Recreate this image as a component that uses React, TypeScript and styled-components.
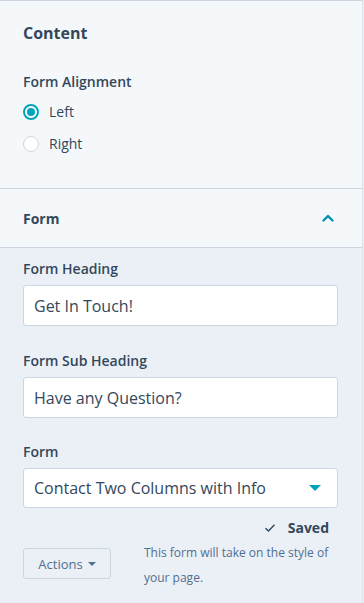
import React from "react";
import styled, { createGlobalStyle } from "styled-components";

const Global = createGlobalStyle`
  html, body { margin: 0; padding: 0; background: #eaf0f6; }
  body { font-family: "Open Sans", "Liberation Sans", sans-serif; color: #33475b; }
  * { box-sizing: border-box; }
`;

const Panel = styled.div`
  width: 363px;
  min-height: 603px;
  border-top: 1px solid #cbd6e2;
  border-right: 1px solid #dfe3eb;
  background: #eaf0f6;
  display: flex;
  flex-direction: column;
`;

const ContentSection = styled.section`
  background: #f5f8fa;
  padding: 21px 23px 34px;
  border-bottom: 1px solid #cbd6e2;
  display: flex;
  flex-direction: column;
`;

const SectionTitle = styled.h2`
  margin: 0;
  font-size: 16px;
  line-height: 22px;
  font-weight: 700;
  color: #33475b;
`;

const Label = styled.div`
  font-size: 14px;
  line-height: 20px;
  font-weight: 600;
  color: #33475b;
`;

const AlignLabel = styled(Label)`
  margin-top: 28px;
`;

const RadioList = styled.div`
  display: flex;
  flex-direction: column;
  gap: 12px;
  margin-top: 10px;
`;

const RadioRow = styled.label`
  display: flex;
  align-items: center;
  gap: 10px;
  font-size: 14px;
  line-height: 20px;
  color: #33475b;
`;

const RadioCircle = styled.span<{ $checked?: boolean }>`
  width: 16px;
  height: 16px;
  border-radius: 50%;
  background: #fff;
  border: ${(p) => (p.$checked ? "2px solid #00a4bd" : "1px solid #cbd6e2")};
  display: flex;
  align-items: center;
  justify-content: center;
  &::after {
    content: "";
    display: ${(p) => (p.$checked ? "block" : "none")};
    width: 8px;
    height: 8px;
    border-radius: 50%;
    background: #00a4bd;
  }
`;

const AccordionHeader = styled.div`
  background: #f5f8fa;
  height: 59px;
  padding: 0 23px;
  display: flex;
  align-items: center;
  justify-content: space-between;
  border-bottom: 1px solid #cbd6e2;
`;

const HeaderTitle = styled.div`
  font-size: 14px;
  font-weight: 700;
  color: #33475b;
`;

const Body = styled.div`
  padding: 11px 24px 0 23px;
  display: flex;
  flex-direction: column;
`;

const Field = styled.div<{ $gap?: number }>`
  display: flex;
  flex-direction: column;
  gap: 6px;
  margin-top: ${(p) => p.$gap ?? 0}px;
`;

const Input = styled.div<{ $h?: number }>`
  height: ${(p) => p.$h ?? 41}px;
  background: #fff;
  border: 1px solid #cbd6e2;
  border-radius: 3px;
  padding: 0 10px;
  display: flex;
  align-items: center;
  justify-content: space-between;
  font-size: 16px;
  color: #33475b;
`;

const Caret = styled.span`
  width: 0;
  height: 0;
  border-left: 6px solid transparent;
  border-right: 6px solid transparent;
  border-top: 6px solid #00a4bd;
  margin-right: 6px;
`;

const Footer = styled.div`
  display: flex;
  align-items: flex-start;
  justify-content: space-between;
  margin-top: 10px;
  padding-right: 9px;
`;

const ActionsButton = styled.button`
  margin-top: 30px;
  width: 88px;
  height: 31px;
  border: 1px solid #cbd6e2;
  border-radius: 3px;
  background: #eaf0f6;
  color: #516f90;
  font-family: inherit;
  font-size: 13px;
  display: flex;
  align-items: center;
  justify-content: center;
  gap: 5px;
`;

const SmallCaret = styled.span`
  width: 0;
  height: 0;
  border-left: 4px solid transparent;
  border-right: 4px solid transparent;
  border-top: 4px solid #516f90;
`;

const InfoCol = styled.div`
  width: 185px;
  display: flex;
  flex-direction: column;
  align-items: flex-end;
`;

const Saved = styled.div`
  display: flex;
  align-items: center;
  gap: 12px;
  font-size: 14px;
  font-weight: 700;
  color: #33475b;
  line-height: 20px;
`;

const Help = styled.p`
  margin: 2px 0 0;
  font-size: 12px;
  line-height: 25px;
  color: #516f90;
  align-self: stretch;
`;

export default function App() {
  return (
    <>
      <Global />
      <Panel>
        <ContentSection>
          <SectionTitle>Content</SectionTitle>
          <AlignLabel>Form Alignment</AlignLabel>
          <RadioList>
            <RadioRow>
              <RadioCircle $checked />
              Left
            </RadioRow>
            <RadioRow>
              <RadioCircle />
              Right
            </RadioRow>
          </RadioList>
        </ContentSection>
        <AccordionHeader>
          <HeaderTitle>Form</HeaderTitle>
          <svg width="12" height="8" viewBox="0 0 12 8" style={{ marginRight: 5 }}>
            <path d="M1.5 6.5 L6 2 L10.5 6.5" fill="none" stroke="#0091ae" strokeWidth="2.4" strokeLinecap="round" strokeLinejoin="round" />
          </svg>
        </AccordionHeader>
        <Body>
          <Field>
            <Label>Form Heading</Label>
            <Input>Get In Touch!</Input>
          </Field>
          <Field $gap={25}>
            <Label>Form Sub Heading</Label>
            <Input>Have any Question?</Input>
          </Field>
          <Field $gap={24}>
            <Label>Form</Label>
            <Input $h={40}>
              Contact Two Columns with Info
              <Caret />
            </Input>
          </Field>
          <Footer>
            <ActionsButton>
              Actions <SmallCaret />
            </ActionsButton>
            <InfoCol>
              <Saved>
                <svg width="12" height="10" viewBox="0 0 12 10">
                  <path d="M1.5 5.2 L4.5 8 L10.5 1.8" fill="none" stroke="#33475b" strokeWidth="1.4" />
                </svg>
                Saved
              </Saved>
              <Help>This form will take on the style of your page.</Help>
            </InfoCol>
          </Footer>
        </Body>
      </Panel>
    </>
  );
}
